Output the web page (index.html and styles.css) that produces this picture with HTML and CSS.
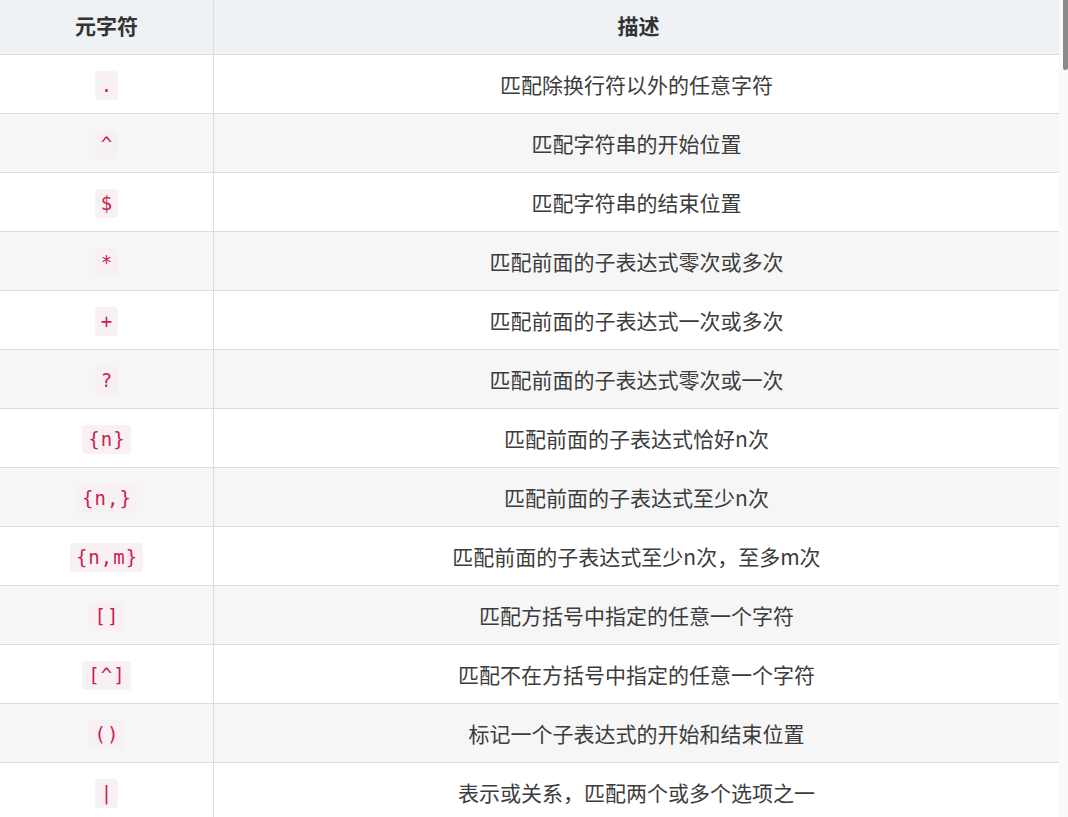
FILE: index.html
```html
<!DOCTYPE html>
<html lang="zh-CN">
<head>
<meta charset="utf-8">
<title>正则表达式元字符</title>
<link rel="stylesheet" href="styles.css">
</head>
<body>
<main class="page">
  <table class="meta-table">
    <thead>
      <tr><th class="col-sym">元字符</th><th class="col-desc">描述</th></tr>
    </thead>
    <tbody>
      <tr><td class="col-sym"><code>.</code></td><td>匹配除换行符以外的任意字符</td></tr>
      <tr><td class="col-sym"><code>^</code></td><td>匹配字符串的开始位置</td></tr>
      <tr><td class="col-sym"><code>$</code></td><td>匹配字符串的结束位置</td></tr>
      <tr><td class="col-sym"><code>*</code></td><td>匹配前面的子表达式零次或多次</td></tr>
      <tr><td class="col-sym"><code>+</code></td><td>匹配前面的子表达式一次或多次</td></tr>
      <tr><td class="col-sym"><code>?</code></td><td>匹配前面的子表达式零次或一次</td></tr>
      <tr><td class="col-sym"><code>{n}</code></td><td>匹配前面的子表达式恰好n次</td></tr>
      <tr><td class="col-sym"><code>{n,}</code></td><td>匹配前面的子表达式至少n次</td></tr>
      <tr><td class="col-sym"><code>{n,m}</code></td><td>匹配前面的子表达式至少n次，至多m次</td></tr>
      <tr><td class="col-sym"><code>[]</code></td><td>匹配方括号中指定的任意一个字符</td></tr>
      <tr><td class="col-sym"><code>[^]</code></td><td>匹配不在方括号中指定的任意一个字符</td></tr>
      <tr><td class="col-sym"><code>()</code></td><td>标记一个子表达式的开始和结束位置</td></tr>
      <tr><td class="col-sym"><code>|</code></td><td>表示或关系，匹配两个或多个选项之一</td></tr>
    </tbody>
  </table>
</main>
<div class="scrollbar"><div class="scrollbar-thumb"></div></div>
</body>
</html>
```
FILE: styles.css
```css
html, body {
  margin: 0;
  padding: 0;
  background: #ffffff;
  overflow: hidden;
}

body {
  font-family: "Noto Sans CJK SC", "Noto Sans", sans-serif;
  color: #3a3a3a;
}

.page {
  width: 1059px;
}

.meta-table {
  width: 1059px;
  border-collapse: collapse;
  table-layout: fixed;
}

.meta-table th,
.meta-table td {
  text-align: center;
  vertical-align: middle;
  border-bottom: 1px solid #dcdcdc;
  font-size: 21px;
  line-height: 28px;
  padding: 0 10px;
}

.meta-table th {
  background: #eef2f5;
  color: #333333;
  font-weight: 700;
  height: 50px;
  padding-bottom: 4px;
}

.meta-table td {
  height: 58px;
  color: #3c3c3c;
}

.meta-table .col-sym {
  width: 193px;
  border-right: 1px solid #dcdcdc;
}

.meta-table .col-desc {
  padding-left: 14px;
}

.meta-table tbody tr:nth-child(even) td {
  background: #f6f6f6;
}

code {
  font-family: "DejaVu Sans Mono", "Liberation Mono", monospace;
  font-size: 19px;
  line-height: 25px;
  display: inline-block;
  padding: 2px 5px 2px 6px;
  letter-spacing: 1px;
  color: #c9234f;
  background: #f7f1f4;
  border-radius: 4px;
  vertical-align: middle;
}

.scrollbar {
  position: fixed;
  top: 0;
  right: 0;
  width: 9px;
  height: 100%;
  background: #fafafa;
}

.scrollbar-thumb {
  position: absolute;
  top: 0;
  right: 0;
  width: 5px;
  height: 70px;
  background: #8a8a8a;
  border-radius: 0 0 3px 3px;
}
```
